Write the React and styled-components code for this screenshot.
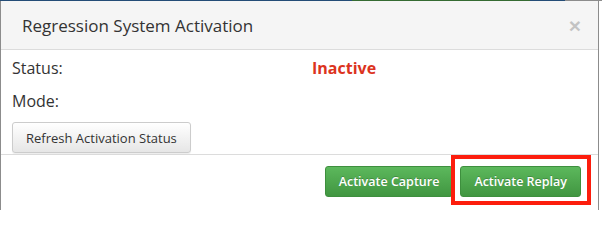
import styled, { createGlobalStyle } from "styled-components";

const GlobalStyle = createGlobalStyle`
  body {
    margin: 0;
    background: #fff;
    font-family: "Open Sans", "Liberation Sans", sans-serif;
  }
`;

const Page = styled.div`
  width: 602px;
  height: 210px;
  overflow: hidden;
`;

const TopStrip = styled.div`
  display: flex;
  height: 1px;
`;

const StripSegment = styled.div`
  width: ${(p) => p.$w}px;
  background: ${(p) => p.$c};
`;

const Modal = styled.div`
  width: 599px;
  height: 209px;
  box-sizing: border-box;
  border-left: 1px solid #8c8c8c;
  border-right: 1px solid #8c8c8c;
  background: #fff;
`;

const Header = styled.div`
  height: 49px;
  box-sizing: border-box;
  display: flex;
  align-items: center;
  justify-content: space-between;
  padding: 0 17px 0 21px;
  background: #f5f5f5;
  border-bottom: 1px solid #dcdcdc;
`;

const Title = styled.h4`
  margin: 0;
  font-size: 17px;
  font-weight: 400;
  color: #333;
`;

const CloseButton = styled.button`
  border: none;
  background: none;
  padding: 0;
  font-family: "Liberation Sans", sans-serif;
  font-size: 21px;
  font-weight: 700;
  line-height: 1;
  color: #000;
  opacity: 0.2;
`;

const Body = styled.div`
  padding: 7px 11px 1px;
`;

const Row = styled.div`
  display: flex;
  height: 22px;
  line-height: 22px;
  font-size: 16px;
  color: #333;
  margin-bottom: 11px;
`;

const Label = styled.span`
  flex: 0 0 300px;
`;

const StatusValue = styled.span`
  font-weight: 700;
  color: #dc3320;
`;

const DefaultButton = styled.button`
  margin-top: -1px;
  height: 31px;
  padding: 0 13px;
  font-family: inherit;
  font-size: 13px;
  color: #333;
  border: 1px solid #ccc;
  border-radius: 3px;
  background: linear-gradient(#fff, #e6e6e6);
  box-shadow: inset 0 1px 0 rgba(255, 255, 255, 0.15), 0 1px 1px rgba(0, 0, 0, 0.075);
`;

const Footer = styled.div`
  display: flex;
  justify-content: flex-end;
  align-items: flex-start;
  gap: 7px;
  padding: 11px 17px 11px 16px;
  border-top: 1px solid #dcdcdc;
`;

// red annotation box drawn over the highlighted button
const Highlight = styled.span`
  position: relative;
  display: inline-flex;

  &::after {
    content: "";
    position: absolute;
    inset: -11px -10px -8px -9px;
    border: 4px solid #fc1d0d;
    pointer-events: none;
  }
`;

const GreenButton = styled.button`
  height: 31px;
  padding: 0 13px;
  font-family: inherit;
  font-size: 12.5px;
  font-weight: 600;
  color: #fff;
  border: 1px solid #3e8f3e;
  border-radius: 3px;
  background: linear-gradient(#5cb85c, #419641);
  text-shadow: 0 -1px 0 rgba(0, 0, 0, 0.2);
`;

export default function App() {
  return (
    <Page>
      <GlobalStyle />
      <TopStrip>
        <StripSegment $w={352} $c="#244d77" />
        <StripSegment $w={178} $c="#356b32" />
        <StripSegment $w={35} $c="#244d77" />
        <StripSegment $w={37} $c="#8c8c8c" />
      </TopStrip>
      <Modal>
        <Header>
          <Title>Regression System Activation</Title>
          <CloseButton>×</CloseButton>
        </Header>
        <Body>
          <Row>
            <Label>Status:</Label>
            <StatusValue>Inactive</StatusValue>
          </Row>
          <Row>
            <Label>Mode:</Label>
          </Row>
          <DefaultButton>Refresh Activation Status</DefaultButton>
        </Body>
        <Footer>
          <GreenButton>Activate Capture</GreenButton>
          <Highlight>
            <GreenButton>Activate Replay</GreenButton>
          </Highlight>
        </Footer>
      </Modal>
    </Page>
  );
}
